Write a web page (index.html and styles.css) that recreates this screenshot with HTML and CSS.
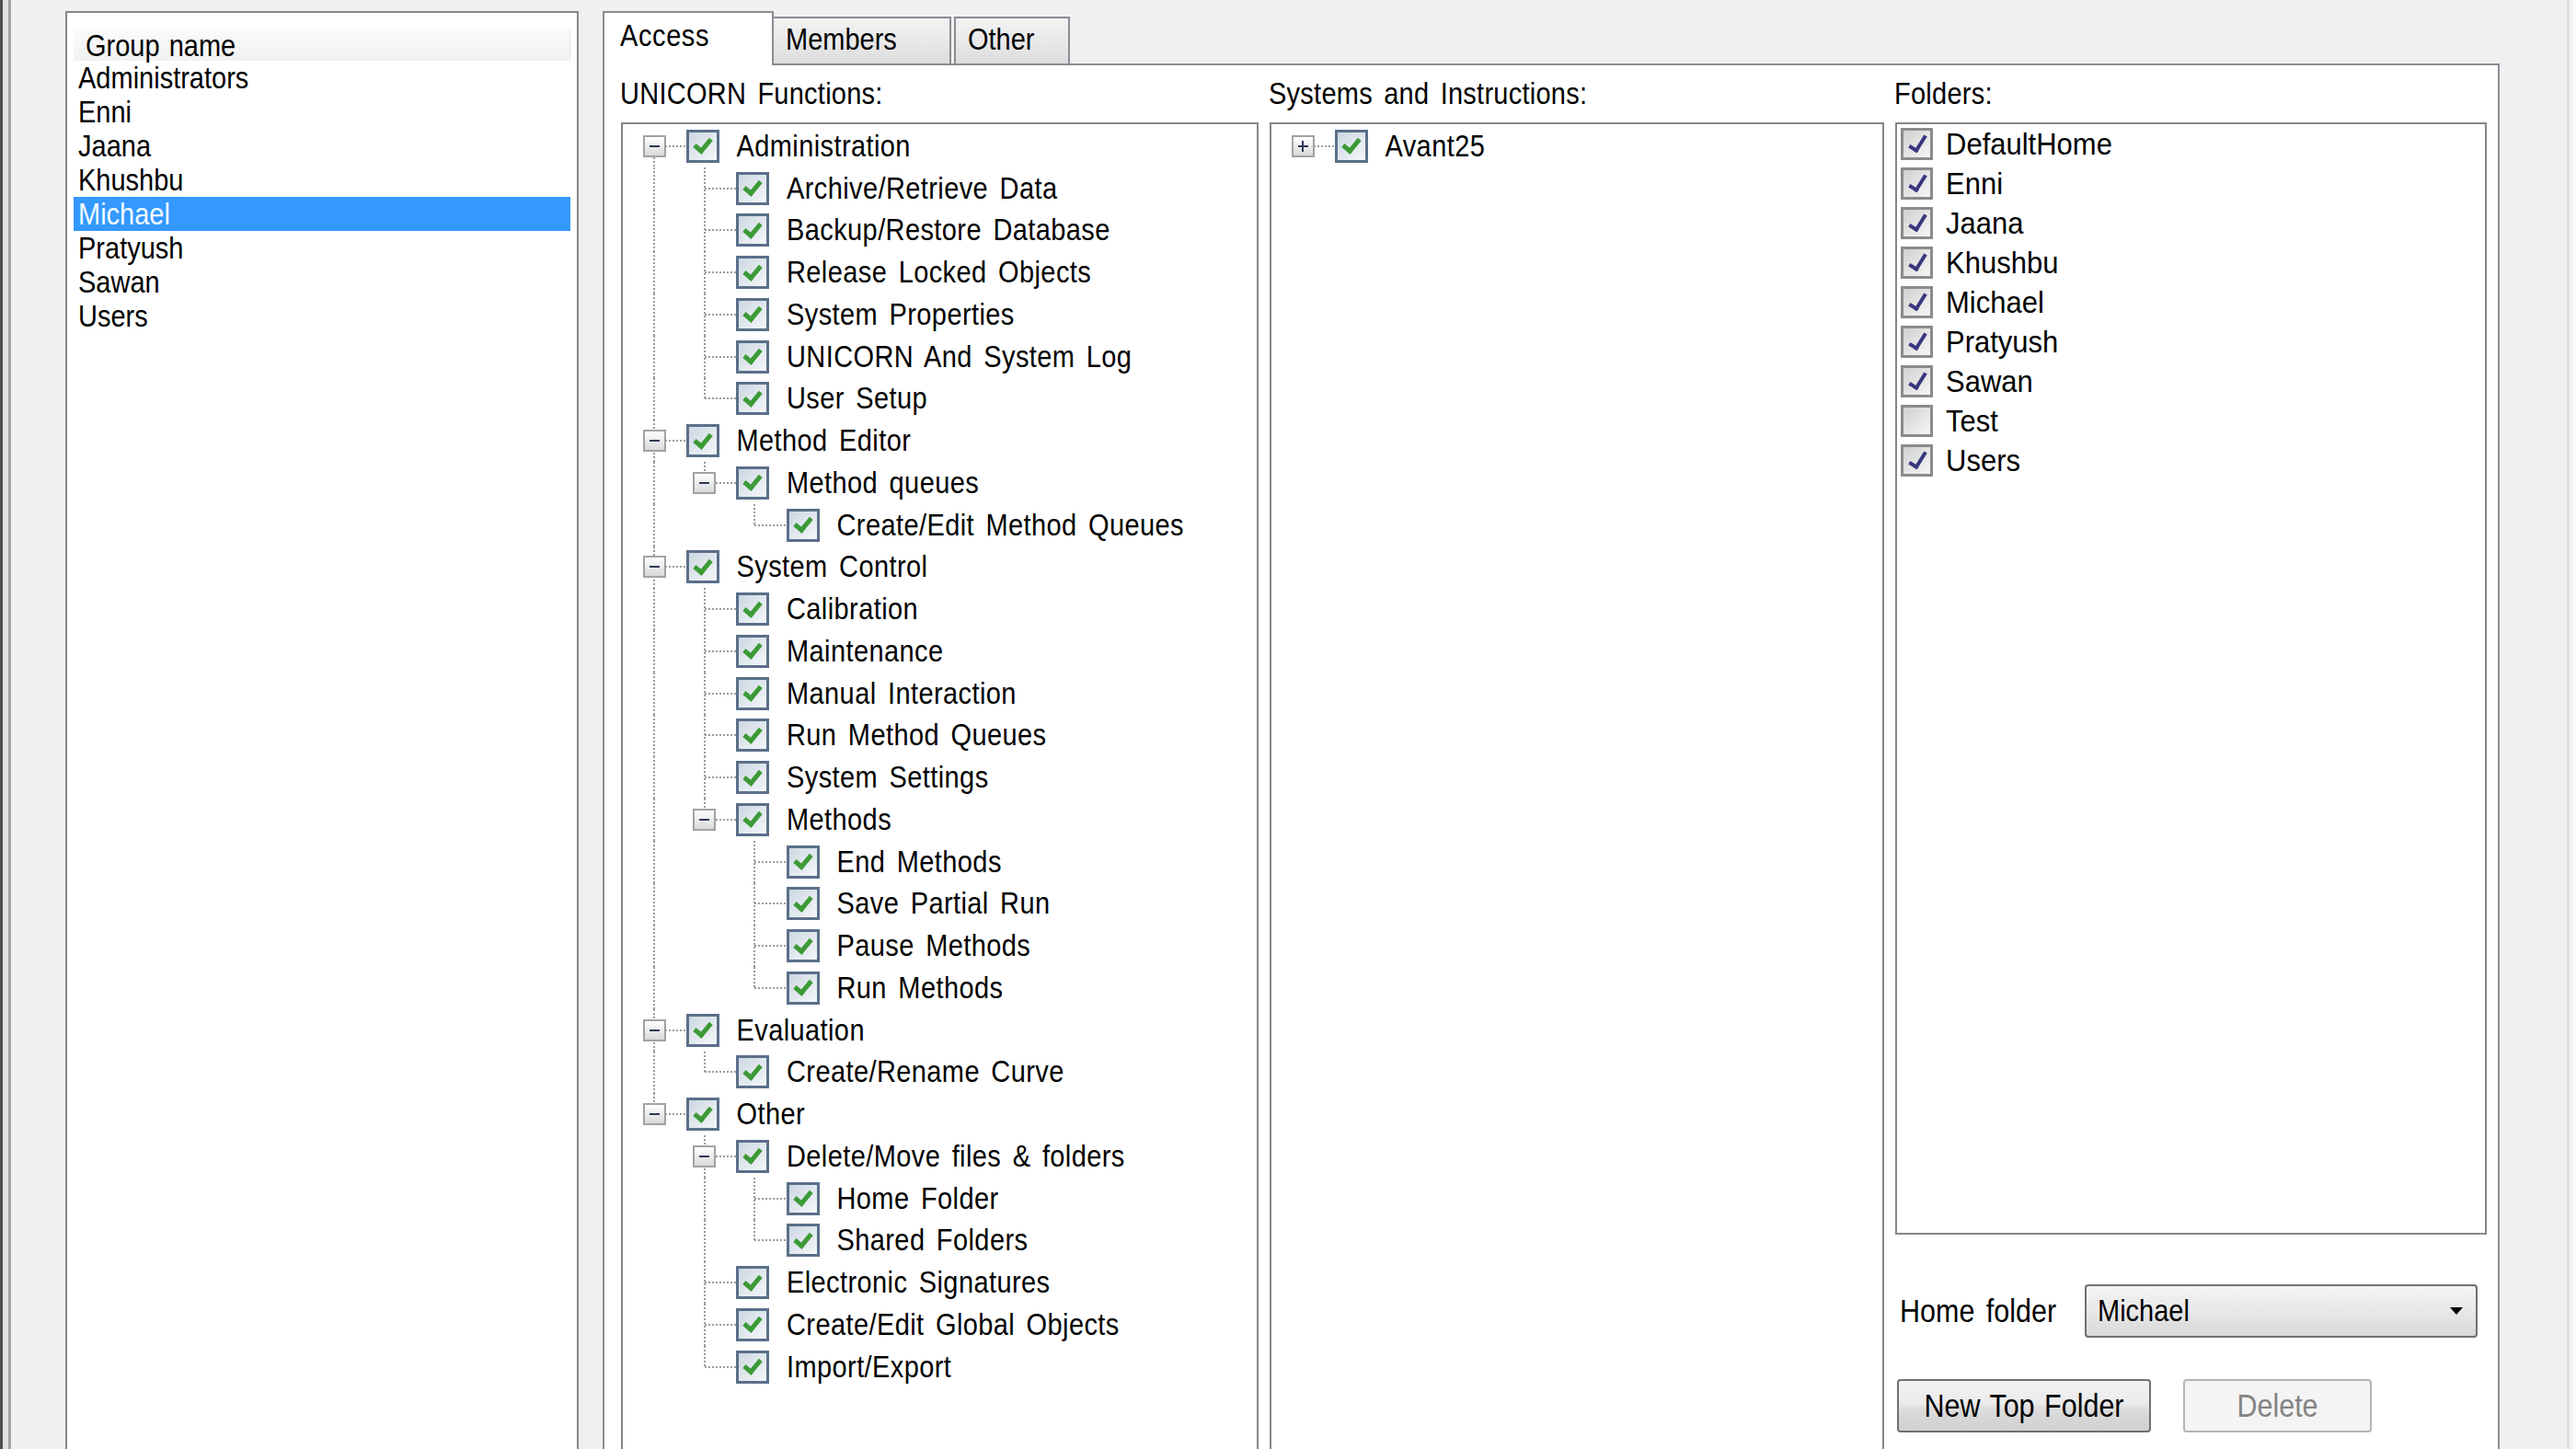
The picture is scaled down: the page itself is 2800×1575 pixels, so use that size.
FILE: index.html
```html
<!DOCTYPE html>
<html>
<head>
  <title>Group Properties</title>
  <link rel="stylesheet" href="styles.css">
</head>
<body>
<div class="window">
  <div class="edge-left"></div>

  <!-- Group list -->
  <div class="groups">
    <div class="groups-head"><span class="t">Group name</span></div>
    <div class="group"><span class="t">Administrators</span></div>
    <div class="group"><span class="t">Enni</span></div>
    <div class="group"><span class="t">Jaana</span></div>
    <div class="group"><span class="t">Khushbu</span></div>
    <div class="group selected"><span class="t">Michael</span></div>
    <div class="group"><span class="t">Pratyush</span></div>
    <div class="group"><span class="t">Sawan</span></div>
    <div class="group"><span class="t">Users</span></div>
  </div>

  <!-- Tab control -->
  <div class="tab-area">
    <div class="tabs">
      <div class="tab active"><span class="t">Access</span></div>
      <div class="tab tab-members"><span class="t">Members</span></div>
      <div class="tab tab-other"><span class="t">Other</span></div>
    </div>

    <div class="page">
      <div class="col">
        <div class="caption"><span class="t">UNICORN Functions:</span></div>
        <div class="tree" id="functions-tree"></div>
      </div>

      <div class="col">
        <div class="caption"><span class="t">Systems and Instructions:</span></div>
        <div class="tree" id="systems-tree"></div>
      </div>

      <div class="col">
        <div class="caption"><span class="t">Folders:</span></div>
        <div class="folders">
          <div class="folder"><span class="box on"></span><span class="t">DefaultHome</span></div>
          <div class="folder"><span class="box on"></span><span class="t">Enni</span></div>
          <div class="folder"><span class="box on"></span><span class="t">Jaana</span></div>
          <div class="folder"><span class="box on"></span><span class="t">Khushbu</span></div>
          <div class="folder"><span class="box on"></span><span class="t">Michael</span></div>
          <div class="folder"><span class="box on"></span><span class="t">Pratyush</span></div>
          <div class="folder"><span class="box on"></span><span class="t">Sawan</span></div>
          <div class="folder"><span class="box"></span><span class="t">Test</span></div>
          <div class="folder"><span class="box on"></span><span class="t">Users</span></div>
        </div>

        <div class="home-row">
          <span class="t home-label">Home folder</span>
          <div class="combo">
            <span class="t">Michael</span>
            <svg class="arrow" width="14" height="8" viewBox="0 0 14 8"><path d="M0 0h14L7 8z" fill="#000"/></svg>
          </div>
        </div>

        <div class="buttons">
          <button class="btn"><span class="t">New Top Folder</span></button>
          <button class="btn" disabled><span class="t">Delete</span></button>
        </div>
      </div>
    </div>
  </div>

  <div class="edge-right"></div>
</div>

<script>
    const unicornFunctions = [
        { name: "Administration", children: [
            "Archive/Retrieve Data",
            "Backup/Restore Database",
            "Release Locked Objects",
            "System Properties",
            "UNICORN And System Log",
            "User Setup"
        ] },
        { name: "Method Editor", children: [
            { name: "Method queues", children: ["Create/Edit Method Queues"] }
        ] },
        { name: "System Control", children: [
            "Calibration",
            "Maintenance",
            "Manual Interaction",
            "Run Method Queues",
            "System Settings",
            { name: "Methods", children: ["End Methods", "Save Partial Run", "Pause Methods", "Run Methods"] }
        ] },
        { name: "Evaluation", children: ["Create/Rename Curve"] },
        { name: "Other", children: [
            { name: "Delete/Move files & folders", children: ["Home Folder", "Shared Folders"] },
            "Electronic Signatures",
            "Create/Edit Global Objects",
            "Import/Export"
        ] }
    ];

    const systems = [
        { name: "Avant25", closed: true }
    ];

    // guides holds one flag per ancestor level: draw the dotted line through this row or not
    function buildTree(container, nodes, guides) {
        nodes.forEach((item, i) => {
            const node = typeof item === "string" ? { name: item } : item;
            const kids = node.children || [];
            const first = i === 0;
            const last = i === nodes.length - 1;

            const row = document.createElement("div");
            row.className = "node";

            guides.forEach(on => {
                const guide = document.createElement("span");
                guide.className = on ? "guide on" : "guide";
                row.appendChild(guide);
            });

            const slot = document.createElement("span");
            slot.className = "slot";
            if (!(guides.length === 0 && first)) slot.classList.add("up");
            if (!last) slot.classList.add("down");
            if (kids.length || node.closed) {
                const exp = document.createElement("span");
                exp.className = node.closed ? "exp closed" : "exp";
                slot.appendChild(exp);
            }
            row.appendChild(slot);

            const box = document.createElement("span");
            box.className = "box on";
            row.appendChild(box);

            const label = document.createElement("span");
            label.className = "t";
            label.textContent = node.name;
            row.appendChild(label);

            container.appendChild(row);
            buildTree(container, kids, guides.concat(!last));
        });
    }

    buildTree(document.getElementById("functions-tree"), unicornFunctions, []);
    buildTree(document.getElementById("systems-tree"), systems, []);
</script>
</body>
</html>
```

FILE: styles.css
```css
/* General */
body {
    margin: 0;
    height: 1575px;
    overflow: hidden;
    background-color: #f0f0f0;
    font-family: "Liberation Sans", Arial, sans-serif;
    font-size: 29px;
    color: #000;
}

.t {
    display: inline-block;
    line-height: 32px;
    white-space: nowrap;
    word-spacing: 4px;
    transform: scaleY(1.12);
}

.window {
    display: flex;
    height: 1600px;
}

.edge-left {
    flex: none;
    width: 13px;
    background: linear-gradient(to right, #4e4e4e 0 3px, #e2e2e2 3px 9px, #a3a3a3 9px 12px, #f0f0f0 12px);
}

.edge-right {
    flex: none;
    width: 10px;
    margin-left: auto;
    background: linear-gradient(to right, #dedede 0 3px, #f9f9f9 3px 5px, #e6e6e6 5px 6px, #fafafa 6px);
}

/* Group list */
.groups {
    flex: none;
    box-sizing: border-box;
    width: 558px;
    margin: 12px 0 0 58px;
    padding: 19px 7px 0;
    border: 2px solid #878787;
    border-bottom: none;
    background: #fff;
}

.groups-head {
    height: 33px;
    display: flex;
    align-items: center;
    padding-left: 13px;
    background: linear-gradient(#fbfbfb, #f1f2f3);
    border-right: 1px solid #e3e3e3;
}

.groups-head .t {
    word-spacing: 2px;
}

.group {
    height: 37px;
    display: flex;
    align-items: center;
    padding-left: 5px;
}

.group.selected {
    background: #3399ff;
    color: #f2f9ff;
}

/* Tabs */
.tab-area {
    flex: none;
    width: 2062px;
    margin: 12px 0 0 26px;
    display: flex;
    flex-direction: column;
}

.tabs {
    display: flex;
    align-items: flex-end;
    height: 59px;
    margin-bottom: -2px;
    position: relative;
    z-index: 1;
}

.tab {
    box-sizing: border-box;
    height: 51px;
    margin-bottom: 2px;
    padding: 7px 0 0 13px;
    border: 2px solid #898c95;
    border-bottom: none;
    background: linear-gradient(#f3f3f3, #e9e9e9 50%, #dcdcdc);
}

.tab.active {
    width: 186px;
    height: 59px;
    margin-bottom: 0;
    padding: 9px 0 0 17px;
    background: #fff;
}

.tab.active .t {
    letter-spacing: 0.6px;
}

.tab-members {
    width: 193px;
    border-left: none;
}

.tab-other {
    width: 126px;
    margin-left: 3px;
}

.page {
    flex: 1;
    display: grid;
    grid-template-columns: 693px 668px 643px;
    column-gap: 12px;
    padding: 0 12px 0 18px;
    border: 2px solid #898c95;
    border-bottom: none;
    background: #fff;
}

.col {
    display: flex;
    flex-direction: column;
    min-height: 0;
}

.caption {
    flex: none;
    height: 62px;
    display: flex;
    align-items: center;
    margin-left: -1px;
}

.caption .t {
    letter-spacing: 0.25px;
}

/* Tree views */
.tree {
    flex: 1;
    padding: 1px 0 0 7px;
    border: 2px solid #878787;
    border-bottom: none;
    background: #fff;
}

.node {
    display: flex;
    align-items: center;
    height: 45.75px;
}

.guide, .slot {
    flex: none;
    position: relative;
    width: 54.5px;
    height: 100%;
    display: flex;
    align-items: center;
    justify-content: center;
}

.guide.on::before, .slot.up::before, .slot.down::before {
    content: "";
    position: absolute;
    left: calc(50% - 1px);
    width: 2px;
    background: repeating-linear-gradient(to bottom, #9c9c9c 0 2px, transparent 2px 4px);
}

.guide.on::before { top: 0; bottom: 0; }
.slot.up::before { top: 0; bottom: 50%; }
.slot.down::before { top: 50%; bottom: 0; }
.slot.up.down::before { top: 0; bottom: 0; }

.slot::after {
    content: "";
    position: absolute;
    left: 50%;
    right: -7px;
    top: calc(50% - 1px);
    height: 2px;
    background: repeating-linear-gradient(to right, #9c9c9c 0 2px, transparent 2px 4px);
}

.exp {
    position: relative;
    z-index: 1;
    box-sizing: border-box;
    width: 25px;
    height: 24px;
    border: 2px solid #a2a2a2;
    background: linear-gradient(#ffffff, #d9d9d9);
}

.exp::before {
    content: "";
    position: absolute;
    left: 5px;
    right: 5px;
    top: 9px;
    height: 2px;
    background: #2c3a56;
}

.exp.closed::after {
    content: "";
    position: absolute;
    top: 4px;
    bottom: 4px;
    left: 9.5px;
    width: 2px;
    background: #2c3a56;
}

/* Check boxes */
.box {
    flex: none;
    box-sizing: border-box;
    width: 35px;
    height: 35px;
    border: 3px solid #8b8b8b;
    background: linear-gradient(135deg, #d0d0d0, #f6f6f6);
    display: flex;
    align-items: center;
    justify-content: center;
}

.box.on::after {
    content: "";
    width: 7px;
    height: 17px;
    margin: -5px 0 0 1px;
    border: solid #37377f;
    border-width: 0 4px 4px 0;
    transform: rotate(32deg);
}

.tree .box {
    width: 36px;
    height: 36px;
    margin-left: 7px;
    border-color: #5a6f89;
    background: linear-gradient(135deg, #cdd7e2, #f4f7fa);
}

.tree .box.on::after {
    width: 7px;
    height: 14px;
    margin: -4px 0 0 0;
    border-color: #3c9a36;
    border-width: 0 5px 5px 0;
    transform: rotate(40deg);
}

.node .t {
    margin-left: 19px;
    letter-spacing: 0.4px;
}

/* Folders */
.folders {
    flex: none;
    box-sizing: border-box;
    height: 1209px;
    padding-left: 4px;
    border: 2px solid #878787;
    background: #fff;
}

.folder {
    height: 43px;
    display: flex;
    align-items: center;
}

.folder .t {
    margin-left: 14px;
    font-size: 31px;
    transform: scaleY(1.08);
}

.home-row {
    flex: none;
    display: flex;
    align-items: center;
    height: 58px;
    margin-top: 54px;
    padding-left: 5px;
}

.home-label {
    width: 201px;
    font-size: 30.5px;
}

.combo {
    box-sizing: border-box;
    width: 427px;
    height: 58px;
    display: flex;
    align-items: center;
    justify-content: space-between;
    padding: 0 14px 0 12px;
    border: 2px solid #707070;
    border-radius: 4px;
    background: linear-gradient(#f4f4f4, #e8e8e8 50%, #d8d8d8);
}

.buttons {
    flex: none;
    display: flex;
    gap: 35px;
    margin-top: 45px;
    padding-left: 2px;
}

.btn {
    box-sizing: border-box;
    width: 276px;
    height: 58px;
    padding: 0;
    border: 2px solid #707070;
    border-radius: 4px;
    background: linear-gradient(#f2f2f2, #ebebeb 45%, #dddddd 55%, #d0d0d0);
    font: inherit;
    font-size: 30.5px;
    color: #000;
}

.btn .t {
    word-spacing: 2px;
}

.btn:disabled {
    width: 205px;
    border-color: #b3b6ba;
    background: #f4f4f4;
    color: #838383;
}
```
